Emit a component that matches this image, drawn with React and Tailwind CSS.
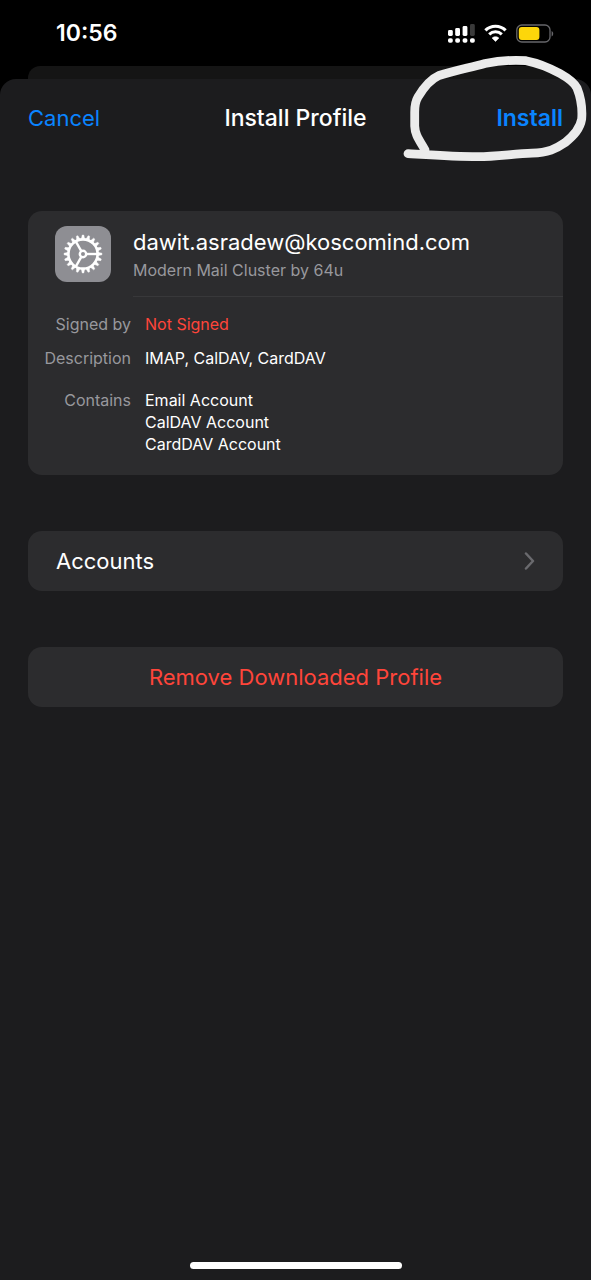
import React from 'react';

const payloads = ['Email Account', 'CalDAV Account', 'CardDAV Account'];

const TEETH = Array.from({ length: 20 }, (_, i) => i * 18);
const SPOKES = [0, 120, 240];

const CellularIcon = () => (
  <svg width="27" height="19" viewBox="0 0 27 19" fill="#fff">
    <rect x="0" y="6" width="4.8" height="6" rx="1.4" />
    <rect x="7.2" y="4" width="4.8" height="8" rx="1.4" />
    <rect x="14.6" y="2" width="4.8" height="10" rx="1.4" />
    <rect x="22" y="0" width="4.8" height="12" rx="1.4" fill="#3a3a3a" />
    <rect x="0" y="14.2" width="4.8" height="4.6" rx="1.8" />
    <rect x="7.2" y="14.2" width="4.8" height="4.6" rx="1.8" />
    <rect x="14.6" y="14.2" width="4.8" height="4.6" rx="1.8" />
    <rect x="22" y="14.2" width="4.8" height="4.6" rx="1.8" />
  </svg>
);

const WifiIcon = () => (
  <svg width="23" height="18" viewBox="0 0 23 18" fill="none">
    <path d="M1.4 6.4a14.4 14.4 0 0 1 20.2 0" stroke="#fff" strokeWidth="3.2" />
    <path d="M5.2 10.4a9 9 0 0 1 12.6 0" stroke="#fff" strokeWidth="3" />
    <path d="M11.5 17.4 8.1 14.1c1.9-1.8 4.9-1.8 6.8 0z" fill="#fff" stroke="#fff" strokeWidth=".6" strokeLinejoin="round" />
  </svg>
);

const BatteryIcon = () => (
  <svg width="38" height="19" viewBox="0 0 38 19" fill="none">
    <rect x="0.8" y="1" width="33.2" height="17" rx="5" stroke="#66666a" strokeWidth="1.3" />
    <rect x="2.8" y="3" width="20.6" height="13" rx="3" fill="#fdd60a" />
    <path d="M35.6 7v5.4c1-.4 1.6-1.5 1.6-2.7S36.6 7.4 35.6 7z" fill="#66666a" />
  </svg>
);

const GearIcon = () => (
  <svg width="42" height="42" viewBox="-21 -21 42 42" fill="none" stroke="#fff">
    <circle r="14.6" strokeWidth="2.6" />
    <circle r="3.2" strokeWidth="2.4" />
    {SPOKES.map((angle) => (
      <path key={angle} d="M4 0H14.5" strokeWidth="2.4" transform={`rotate(${angle})`} />
    ))}
    {TEETH.map((angle) => (
      <path
        key={angle}
        d="M15 -1.7 L19 -0.8 V0.8 L15 1.7Z"
        fill="#fff"
        strokeWidth="0.4"
        strokeLinejoin="round"
        transform={`rotate(${angle})`}
      />
    ))}
  </svg>
);

// Hand-drawn ring around the Install button
const MarkerCircle = () => (
  <svg
    className="absolute top-[50px] right-0 pointer-events-none"
    width="191"
    height="115"
    viewBox="400 50 191 115"
    fill="none"
  >
    <path
      d="M408 153.7 C430 155 455 156.7 478 156.7 C496 156.7 515 153.7 532 153.2 C548 152.500 556 149 565 142.7 C574 135.500 580 129 581.700 119 C582.500 108 581 98 577 88 C574 82 568 78 560 73.500 C548 67 538 63 526 60.700 C512 59.700 500 60.500 485 63.500 C468 68 453 71 439 75.500 C431 79 424 87 418 97 C415 102 414.700 106 414.700 112 V126 C415 134 418 138 425 150"
      stroke="#ebebeb"
      strokeWidth="8.8"
      strokeLinecap="round"
      strokeLinejoin="round"
    />
  </svg>
);

const StatusBar = () => (
  <div className="flex items-center justify-between h-[66px] pl-14 pr-[37px]">
    <span className="text-[23px] leading-7 font-semibold">10:56</span>
    <div className="flex items-center gap-[9px]">
      <CellularIcon />
      <WifiIcon />
      <BatteryIcon />
    </div>
  </div>
);

const DetailRow = ({ label, children }) => (
  <div className="flex gap-[14px]">
    <dt className="w-[103px] text-right text-[#98989d]">{label}</dt>
    <dd className="flex-1">{children}</dd>
  </div>
);

const App = () => {
  return (
    <div className="relative flex flex-col min-h-screen bg-black text-white font-['Inter',sans-serif]">
      <StatusBar />

      {/* Edge of the sheet behind */}
      <div className="h-[13px] mx-7 rounded-t-xl bg-[#151515]" />

      <main className="flex flex-col flex-1 px-7 rounded-t-2xl bg-[#1c1c1e]">
        <header className="grid grid-cols-3 items-center h-[77px] text-[22px] leading-7">
          <button className="justify-self-start text-[#0a84ff]">Cancel</button>
          <h1 className="justify-self-center text-[23px] font-medium whitespace-nowrap">Install Profile</h1>
          <button className="justify-self-end text-[23px] font-semibold text-[#0a84ff]">Install</button>
        </header>

        {/* Profile card */}
        <section className="mt-[55px] pb-5 rounded-[14px] bg-[#2c2c2e]">
          <div className="flex pl-[27px]">
            <div className="flex items-center justify-center w-14 h-14 mt-[15px] mr-[22px] rounded-xl bg-[#8e8e93]">
              <GearIcon />
            </div>
            <div className="flex-1 h-[86px] pt-[17px] border-b border-[#38383a]">
              <h2 className="text-[22px] leading-7">dawit.asradew@koscomind.com</h2>
              <p className="text-base leading-7 text-[#98989d]">Modern Mail Cluster by 64u</p>
            </div>
          </div>
          <dl className="pt-4 text-base leading-[22px]">
            <DetailRow label="Signed by">
              <span className="text-[#ff453a]">Not Signed</span>
            </DetailRow>
            <div className="pt-3 pb-5">
              <DetailRow label="Description">IMAP, CalDAV, CardDAV</DetailRow>
            </div>
            <DetailRow label="Contains">
              {payloads.map((name) => (
                <div key={name}>{name}</div>
              ))}
            </DetailRow>
          </dl>
        </section>

        <button className="flex items-center justify-between h-[60px] mt-14 px-7 rounded-[14px] bg-[#2c2c2e] text-[22px] leading-7">
          Accounts
          <svg width="11" height="18" viewBox="0 0 11 18" fill="none">
            <path d="M2 1.5 9 9l-7 7.5" stroke="#6a6a6e" strokeWidth="2.5" strokeLinecap="round" strokeLinejoin="round" />
          </svg>
        </button>

        <button className="h-[60px] mt-14 rounded-[14px] bg-[#2c2c2e] text-[22px] leading-7 text-[#ff453a]">
          Remove Downloaded Profile
        </button>

        {/* Home indicator */}
        <div className="w-[212px] h-[7px] mt-auto mb-[11px] mx-auto rounded-full bg-white" />
      </main>

      <MarkerCircle />
    </div>
  );
};

export default App;
